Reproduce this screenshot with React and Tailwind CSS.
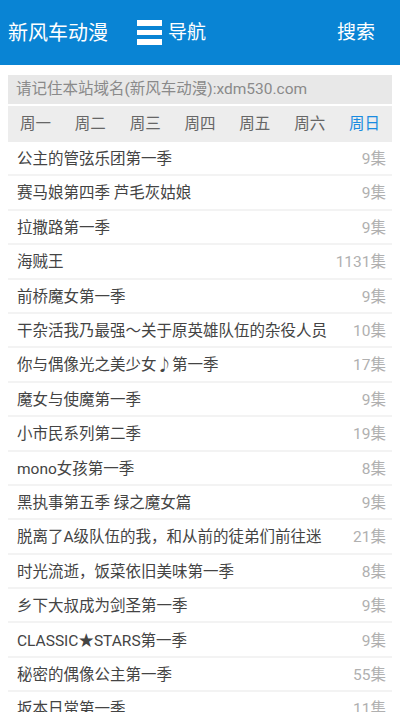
import React, { useState } from "react";

const days = ["周一", "周二", "周三", "周四", "周五", "周六", "周日"];

const shows = [
  { name: "公主的管弦乐团第一季", count: "9集" },
  { name: "赛马娘第四季 芦毛灰姑娘", count: "9集" },
  { name: "拉撒路第一季", count: "9集" },
  { name: "海贼王", count: "1131集" },
  { name: "前桥魔女第一季", count: "9集" },
  { name: "干杂活我乃最强～关于原英雄队伍的杂役人员", count: "10集" },
  { name: "你与偶像光之美少女♪第一季", count: "17集" },
  { name: "魔女与使魔第一季", count: "9集" },
  { name: "小市民系列第二季", count: "19集" },
  { name: "mono女孩第一季", count: "8集" },
  { name: "黑执事第五季 绿之魔女篇", count: "9集" },
  { name: "脱离了A级队伍的我，和从前的徒弟们前往迷", count: "21集" },
  { name: "时光流逝，饭菜依旧美味第一季", count: "8集" },
  { name: "乡下大叔成为剑圣第一季", count: "9集" },
  { name: "CLASSIC★STARS第一季", count: "9集" },
  { name: "秘密的偶像公主第一季", count: "55集" },
  { name: "坂本日常第一季", count: "11集" },
];

export default function App() {
  const [day, setDay] = useState(6);

  return (
    <div className="w-[400px] min-h-screen bg-white font-['Roboto','Noto_Sans_CJK_SC',sans-serif]">
      <header className="h-[65px] bg-[#0984d4] flex items-center text-white pl-2">
        <span className="text-[20px] leading-none">新风车动漫</span>
        <a className="ml-[29px] flex items-center gap-[6px]">
          <span className="flex flex-col gap-[4px] w-[25px]">
            <span className="h-[6px] bg-white" />
            <span className="h-[5px] bg-white" />
            <span className="h-[6px] bg-white" />
          </span>
          <span className="text-[19px] leading-none">导航</span>
        </a>
        <a className="ml-auto mr-[25px] text-[19px] leading-none">搜索</a>
      </header>

      <div className="px-2 pt-[10px]">
        <div className="h-[29px] bg-[#e8e8e8] flex items-center pl-2 text-[15.5px] text-[#8a8a8a]">
          请记住本站域名(新风车动漫):xdm530.com
        </div>
        <div className="mt-[2px] h-[36px] bg-[#ededed] flex items-center pt-[1px]">
          {days.map((d, i) => (
            <button
              key={d}
              onClick={() => setDay(i)}
              className={
                "flex-1 text-center text-[15.5px] " +
                (i === day ? "text-[#1a8be0]" : "text-[#666]")
              }
            >
              {d}
            </button>
          ))}
        </div>
        <ul>
          {shows.map((s) => (
            <li
              key={s.name}
              className="h-[34.4px] border-b-2 border-[#f3f3f3] flex items-center pl-[9px] pr-[6px] pt-[3px]"
            >
              <span className="flex-1 truncate text-[15.5px] text-[#444]">
                {s.name}
              </span>
              <span className="ml-2 text-[15.5px] text-[#b0b0b0]">{s.count}</span>
            </li>
          ))}
        </ul>
      </div>
    </div>
  );
}
